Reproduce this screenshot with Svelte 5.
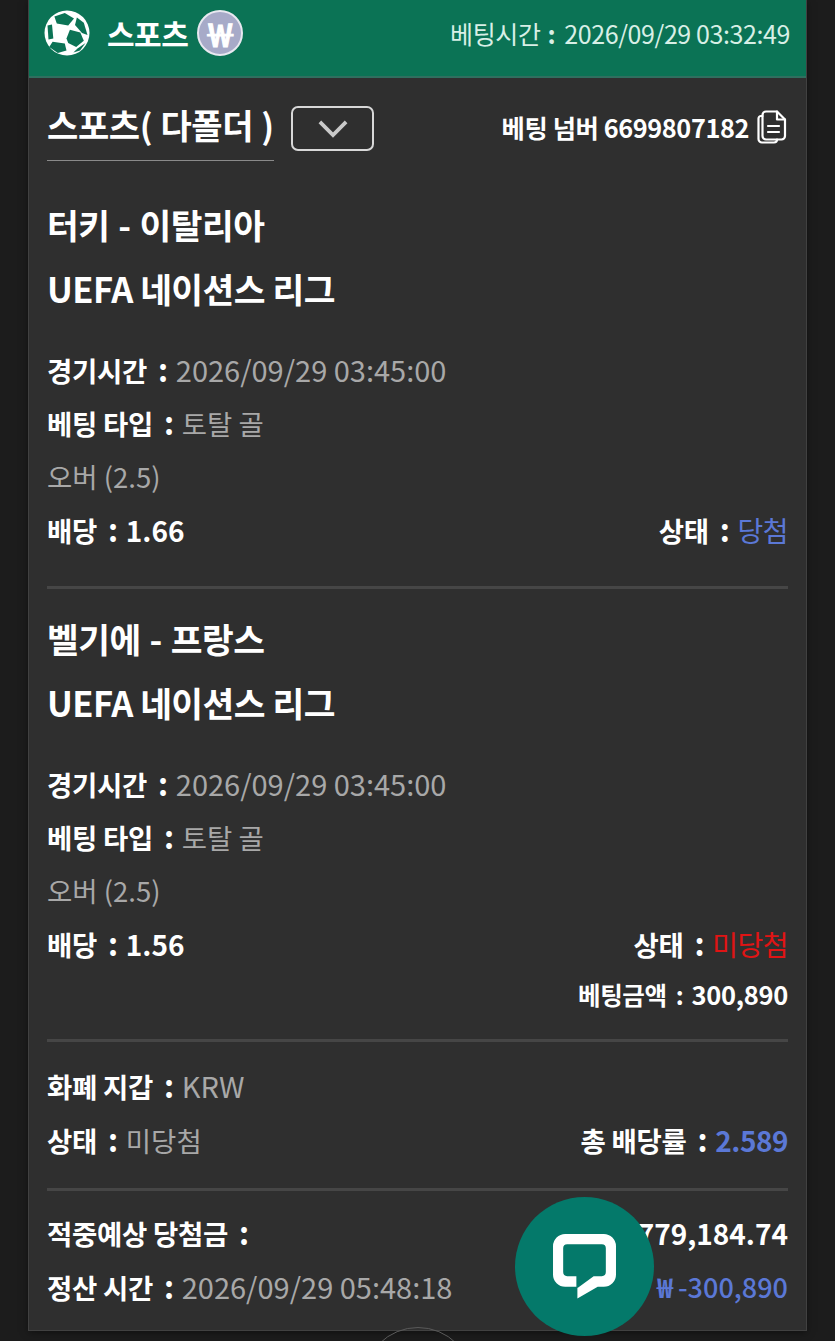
<script>
  const matches = [
    { name: "터키 - 이탈리아", odds: "1.66", state: "당첨", stateClass: "win", amount: null },
    { name: "벨기에 - 프랑스", odds: "1.56", state: "미당첨", stateClass: "lose", amount: "300,890" }
  ];
</script>

{#snippet label(text)}
  <b class="label">{text}<i class="c">:</i></b>
{/snippet}

<div class="page">
  <div class="card">
    <header class="top">
      <div class="row left">
        <svg class="ball" viewBox="0 0 46 46">
          <circle cx="23" cy="23" r="22.500" fill="#fff" />
          <g fill="#0b7355">
            <path d="M10.400 6.600L20.800 3.100 30 8.600 24.200 15.600 12.800 13.500z" />
            <path d="M32.900 7.600L39.800 12.800 43.500 24.900 38 23 31 15z" />
            <path d="M25.900 19.700L36.300 22.500 39.800 30.800 32.200 37 24.200 32.900 22.500 28.400z" />
            <path d="M8.600 31.800L20.800 33.600 22.500 40.500 13.800 43 5.200 37z" />
            <path d="M3.500 15.600L8 14.500 9.300 28.400 4.500 29.400z" />
            <path d="M41.500 33L36 40.500 29.400 42.500 33.500 38.500z" />
          </g>
        </svg>
        <span class="sport">스포츠</span>
        <span class="won">￦</span>
      </div>
      <span class="time">베팅시간<i class="c">:</i>2026/09/29 03:32:49</span>
    </header>

    <div class="body">
      <div class="head">
        <div class="row">
          <h2 class="kind">스포츠( 다폴더 )</h2>
          <button class="toggle" aria-label="펼치기">
            <svg viewBox="0 0 32 20" width="30" height="19">
              <path d="M2 3l14 14L30 3" fill="none" stroke="#c9c9c9" stroke-width="4" />
            </svg>
          </button>
        </div>
        <div class="row ticket">
          <span>베팅 넘버 6699807182</span>
          <svg viewBox="0 0 30 34" width="30" height="34" fill="none" stroke="#fff" stroke-width="2.200" stroke-linejoin="round" stroke-linecap="round">
            <path d="M5.500 6H4A2.500 2.500 0 0 0 1.500 8.500v20.500A3.500 3.500 0 0 0 5 32.500h12a3 3 0 0 0 3-3" />
            <path d="M9 1.500h11l8 8V26a3.500 3.500 0 0 1-3.500 3.500H9A3.500 3.500 0 0 1 5.500 26V5A3.500 3.500 0 0 1 9 1.500z" />
            <path d="M20 1.500v8h8M11 16h11M11 22h11" />
          </svg>
        </div>
      </div>

      {#each matches as m}
        <section class="match">
          <h3 class="name">{m.name}</h3>
          <h3>UEFA 네이션스 리그</h3>
          <div class="lines">
            <p>{@render label("경기시간")}<span class="muted">2026/09/29 03:45:00</span></p>
            <p>{@render label("베팅 타입")}<span class="muted ko">토탈 골</span></p>
            <p class="muted ko">오버 (2.5)</p>
            <p class="split">
              <span>{@render label("배당")}<b class="num">{m.odds}</b></span>
              <span>{@render label("상태")}<span class={m.stateClass}>{m.state}</span></span>
            </p>
            {#if m.amount}
              <p class="split end amount"><b>베팅금액<i class="c">:</i><span class="amt">{m.amount}</span></b></p>
            {/if}
          </div>
        </section>
      {/each}

      <section class="summary">
        <p>{@render label("화폐 지갑")}<span class="muted">KRW</span></p>
        <p class="split">
          <span>{@render label("상태")}<span class="muted ko">미당첨</span></span>
          <span>{@render label("총 배당률")}<b class="num win">2.589</b></span>
        </p>
      </section>

      <section class="summary last">
        <p class="split">
          {@render label("적중예상 당첨금")}
          <b class="num">₩ 779,184.74</b>
        </p>
        <p class="split">
          <span>{@render label("정산 시간")}<span class="muted">2026/09/29 05:48:18</span></span>
          <span class="win paid"><b class="cur">₩</b>-300,890</span>
        </p>
      </section>
    </div>
  </div>

  <div class="peek"></div>
  <button class="chat" aria-label="채팅">
    <svg viewBox="0 0 62 64" width="63" height="65">
      <path d="M12 0H50A12 12 0 0 1 62 12V40A12 12 0 0 1 50 52H44L24 63.500V52H12A12 12 0 0 1 0 40V12A12 12 0 0 1 12 0z" fill="#fff" />
      <path d="M14 10H48A4 4 0 0 1 52 14V37.500A4 4 0 0 1 48 41.500H40L24.500 53H23V41.500H14A4 4 0 0 1 10 37.500V14A4 4 0 0 1 14 10z" fill="#04796a" />
    </svg>
  </button>
</div>

<style>
  :global(body) {
    margin: 0;
    background: #1c1c1c;
  }

  .page {
    position: relative;
    height: 1341px;
    overflow: hidden;
    padding: 0 29px;
    box-sizing: border-box;
    color: #fff;
    font-family: "Noto Sans CJK KR", "Noto Sans", sans-serif;
  }

  .card {
    background: #2f2f2f;
    height: 1330px;
    box-shadow: 0 0 0 1px #414141, 0 2px 8px rgba(0, 0, 0, 0.5);
    box-sizing: border-box;
  }

  .top {
    height: 78px;
    box-sizing: border-box;
    background: #0b7355;
    border-bottom: 2px solid #2f6f5f;
    display: flex;
    align-items: center;
    justify-content: space-between;
    padding: 0 16px 10px 15px;
  }

  .row {
    display: flex;
    align-items: center;
  }

  .ball {
    width: 46px;
    height: 46px;
  }

  .sport {
    margin-left: 17px;
    font-size: 30px;
    font-weight: 700;
    letter-spacing: -0.5px;
  }

  .won {
    margin-left: 9px;
    width: 46px;
    height: 46px;
    border-radius: 50%;
    background: #a7aac8;
    border: 2px solid #e8e8f0;
    box-sizing: border-box;
    display: flex;
    align-items: center;
    justify-content: center;
    font-size: 30px;
    font-weight: 700;
    line-height: 1;
    -webkit-text-stroke: 1px #fff;
  }

  .time {
    font-size: 25px;
    color: #d8efe6;
    letter-spacing: -0.4px;
  }

  .time .c {
    font-size: 25px;
    font-weight: 700;
    margin: 0 9px 0 7px;
  }

  .body {
    padding: 0 18px;
  }

  .head {
    display: flex;
    justify-content: space-between;
    align-items: flex-start;
    padding-top: 20px;
  }

  .kind {
    margin: 0;
    width: 227px;
    height: 63px;
    box-sizing: border-box;
    border-bottom: 1px solid #8a8a8a;
    font-size: 34px;
    font-weight: 700;
    line-height: 54px;
    white-space: nowrap;
    letter-spacing: -0.4px;
    word-spacing: 1px;
  }

  .toggle {
    margin: -2px 0 0 17px;
    width: 83px;
    height: 45px;
    padding: 0;
    background: transparent;
    border: 2px solid #d8d8d8;
    border-radius: 7px;
    display: flex;
    align-items: center;
    justify-content: center;
  }

  .ticket {
    gap: 8px;
    font-size: 25.300px;
    font-weight: 700;
    letter-spacing: -0.4px;
    padding: 11px 1px 0 0;
  }

  .match {
    padding: 31px 0 30px;
    border-bottom: 3px solid #464646;
  }

  .match + .match {
    padding-top: 17px;
  }

  h3 {
    margin: 0;
    font-size: 34.500px;
    font-weight: 700;
    line-height: 64px;
    letter-spacing: -0.5px;
  }

  .name {
    word-spacing: 1.500px;
  }

  .lines {
    margin-top: 23px;
  }

  p {
    margin: 0;
    font-size: 29px;
    line-height: 53.300px;
    height: 53.300px;
  }

  .split {
    display: flex;
    justify-content: space-between;
  }

  .end {
    justify-content: flex-end;
  }

  .amount {
    font-size: 24.500px;
    line-height: 31px;
    height: 31px;
    margin-top: 8px;
    letter-spacing: -0.3px;
  }

  .amount .c {
    font-size: 24.500px;
    margin: 0 8px 0 9px;
  }

  .amt {
    font-size: 25.500px;
  }

  b {
    font-weight: 700;
  }

  .label {
    font-size: 27.500px;
    letter-spacing: -0.3px;
  }

  .c {
    font-size: 31px;
    line-height: 1;
    font-style: normal;
    font-weight: 700;
    margin: 0 8px 0 11px;
  }

  .num {
    font-size: 28px;
    letter-spacing: 0;
  }

  .muted {
    color: #a8a8a8;
  }

  .ko {
    font-size: 27.500px;
  }

  .win {
    color: #5b78d6;
    letter-spacing: -0.5px;
    font-size: 28px;
  }

  .lose {
    color: #e01414;
    letter-spacing: -0.5px;
    font-size: 28px;
  }

  .paid {
    font-size: 27px;
    font-weight: 500;
    letter-spacing: 0;
  }

  .cur {
    margin-right: 5px;
  }

  .summary {
    padding: 17px 0 22px;
    border-bottom: 3px solid #464646;
  }

  .summary.last {
    border-bottom: 0;
    padding-top: 16px;
  }

  .peek {
    position: absolute;
    left: 363px;
    top: 1327px;
    width: 110px;
    height: 110px;
    border-radius: 50%;
    border: 1px solid #5a5a5a;
    box-sizing: border-box;
  }

  .chat {
    position: absolute;
    left: 515px;
    top: 1197px;
    width: 139px;
    height: 139px;
    border: 0;
    padding: 0;
    border-radius: 50%;
    background: #04796a;
    display: flex;
    align-items: center;
    justify-content: center;
  }
</style>
